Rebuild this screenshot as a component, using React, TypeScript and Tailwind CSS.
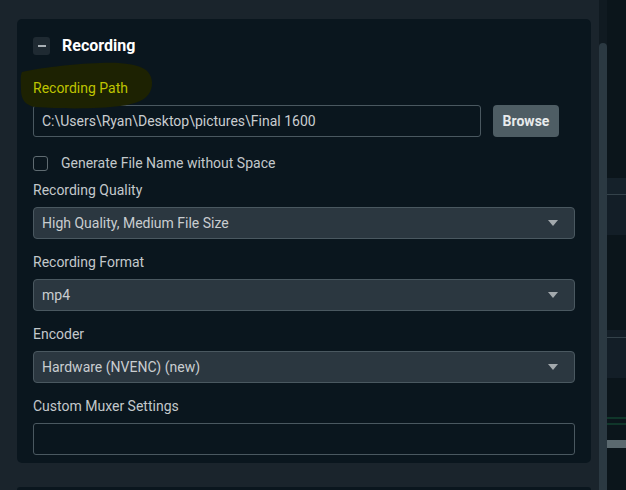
import { ReactNode } from "react";

const font = { fontFamily: "Roboto, 'Liberation Sans', sans-serif" };

function Caret() {
  return (
    <svg width="10" height="6" viewBox="0 0 10 6" className="shrink-0">
      <path d="M0 0h10L5 6z" fill="#a3a9ad" />
    </svg>
  );
}

function Label({ children, className = "" }: { children: ReactNode; className?: string }) {
  return <div className={`h-[18px] text-[14px] leading-[18px] text-[#c3c8cb] ${className}`}>{children}</div>;
}

function Select({ value }: { value: string }) {
  return (
    <div className="mt-2 flex h-8 items-center justify-between rounded-[4px] border border-[#4a5860] bg-[#2b3740] pl-2 pr-4 text-[14px] text-[#c9cdd0]">
      <span>{value}</span>
      <Caret />
    </div>
  );
}

function Highlight() {
  return (
    <svg className="pointer-events-none absolute left-[-13px] top-[-17px]" width="134" height="48" viewBox="0 0 134 48">
      <path
        d="M2 10 C 20 6, 50 2, 80 1 C 100 0, 118 2, 126 8 C 132 13, 134 22, 130 30 C 126 38, 116 42, 100 44 C 80 47, 40 47, 16 45 C 6 44, 1 38, 1 28 C 1 20, 0 14, 2 10 Z"
        fill="#1d2202"
      />
    </svg>
  );
}

export default function App() {
  return (
    <div className="flex h-[490px] w-[626px] overflow-hidden bg-[#1a242c]" style={font}>
      <div className="flex w-[599px] shrink-0 flex-col gap-6 pl-[17px] pr-2 pt-[19px]">
        <section className="flex flex-col rounded-[5px] bg-[#0a161e] px-4 pb-2 pt-[18px]">
          <div className="flex h-[18px] items-center gap-3">
            <div className="flex h-[18px] w-[17px] items-center justify-center rounded-[3px] bg-[#1f2a32]">
              <div className="h-[2px] w-[8px] bg-[#a9b0b5]" />
            </div>
            <h2 className="text-[16px] font-bold leading-[18px] text-white">Recording</h2>
          </div>

          <div className="relative mt-6">
            <Highlight />
            <Label className="relative !text-[#bec400]">Recording Path</Label>
          </div>
          <div className="mt-2 flex gap-3">
            <div className="flex h-8 w-[448px] items-center rounded-[3px] border border-[#4a5860] pl-2 text-[14px] text-[#c9cdd0]">
              C:\Users\Ryan\Desktop\pictures\Final 1600
            </div>
            <button className="h-8 w-[66px] rounded-[4px] bg-[#4e5d64] text-[14px] font-bold text-[#e8ebec]">Browse</button>
          </div>

          <label className="mt-[18px] flex h-4 items-center gap-[13px] text-[14px] text-[#c3c8cb]">
            <span className="h-[15px] w-[15px] rounded-[3px] border border-[#5f6b71]" />
            Generate File Name without Space
          </label>

          <Label className="mt-[10px]">Recording Quality</Label>
          <Select value="High Quality, Medium File Size" />

          <Label className="mt-[14px]">Recording Format</Label>
          <Select value="mp4" />

          <Label className="mt-[14px]">Encoder</Label>
          <Select value="Hardware (NVENC) (new)" />

          <Label className="mt-[14px]">Custom Muxer Settings</Label>
          <div className="mt-2 h-8 rounded-[3px] border border-[#4a5860]" />
        </section>
        <section className="h-10 rounded-t-[5px] bg-[#0a161e]" />
      </div>

      <div className="flex w-2 shrink-0 flex-col bg-[#101a21]">
        <div className="mt-[43px] flex-1 rounded-t-[4px] bg-[#2b3942]" />
      </div>

      <div className="flex flex-1 flex-col bg-[#0b151b]">
        <div className="h-[178px]" />
        <div className="h-[17px] border-b border-[#34424a] bg-[#15212a]" />
        <div className="h-[40px] bg-[#131e27]" />
        <div className="h-[95px]" />
        <div className="h-[8px] border-b border-[#34424a] bg-[#131e27]" />
        <div className="h-[40px] bg-[#131e27]" />
        <div className="h-[39px]" />
        <div className="h-[2px] bg-[#10362a]" />
        <div className="h-[4px]" />
        <div className="h-[2px] bg-[#10362a]" />
        <div className="h-[15px]" />
        <div className="h-[8px] bg-[#5b696f]" />
      </div>
    </div>
  );
}
